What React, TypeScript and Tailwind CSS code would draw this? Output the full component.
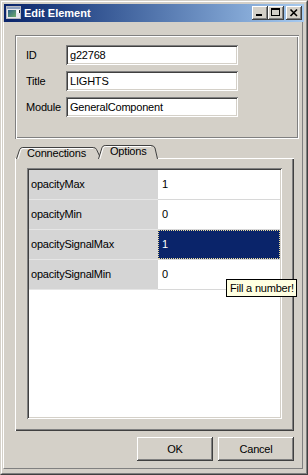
import React from "react";

const rows: [string, string][] = [
  ["opacityMax", "1"],
  ["opacityMin", "0"],
  ["opacitySignalMax", "1"],
  ["opacitySignalMin", "0"],
];

function CaptionButton({ children, className = "" }: { children: React.ReactNode; className?: string }) {
  return (
    <div
      className={
        "w-[16px] h-[14px] bg-[#d4d0c8] shadow-[inset_-1px_-1px_0_#404040,inset_1px_1px_0_#ffffff,inset_-2px_-2px_0_#808080,inset_2px_2px_0_#d4d0c8] " +
        className
      }
    >
      {children}
    </div>
  );
}

function Field({ label, value }: { label: string; value: string }) {
  return (
    <div className="flex items-center h-[20px]">
      <div className="w-[40px] leading-none">{label}</div>
      <div className="w-[172px] h-[20px] bg-white flex items-center pl-[4px] shadow-[inset_1px_1px_0_#808080,inset_-1px_-1px_0_#ffffff,inset_2px_2px_0_#404040,inset_-2px_-2px_0_#d4d0c8]">
        <span className="leading-none">{value}</span>
      </div>
    </div>
  );
}

function Button({ label }: { label: string }) {
  return (
    <div className="w-[76px] h-[24px] bg-[#d4d0c8] flex items-center justify-center shadow-[inset_-1px_-1px_0_#404040,inset_1px_1px_0_#ffffff,inset_-2px_-2px_0_#808080,inset_2px_2px_0_#d4d0c8]">
      <span className="leading-none">{label}</span>
    </div>
  );
}

export default function App() {
  return (
    <div className="w-[308px] h-[475px] bg-[#d4d0c8] font-['Liberation_Sans',Arial,sans-serif] text-[11px] tracking-[-0.2px] text-black">
      <div className="w-full h-full border border-t-[#d4d0c8] border-l-[#d4d0c8] border-r-[#404040] border-b-[#404040]">
        <div className="w-full h-full border border-t-white border-l-white border-r-[#808080] border-b-[#808080] p-px flex flex-col">
          {/* Title bar */}
          <div className="mx-px mt-px h-[18px] bg-linear-to-r from-[#0a246a] to-[#a6caf0] flex items-center pl-[2px] pr-[2px]">
            <svg width="16" height="14" viewBox="0 0 16 14" className="shrink-0">
              <defs>
                <linearGradient id="ig" x1="0" y1="0" x2="1" y2="1">
                  <stop offset="0" stopColor="#2d5f8a" />
                  <stop offset="1" stopColor="#6fae6a" />
                </linearGradient>
              </defs>
              <rect x="0" y="0" width="15" height="13" fill="#b8b8c0" />
              <rect x="1" y="1" width="13" height="11" fill="#e8e8ee" />
              <rect x="1" y="1" width="13" height="2" fill="#8da0c0" />
              <rect x="2" y="4" width="8" height="7" fill="url(#ig)" />
              <rect x="11" y="4" width="2" height="3" fill="#ffffff" />
              <rect x="13" y="4" width="1" height="3" fill="#202020" />
            </svg>
            <span className="ml-[2px] text-white font-bold text-[11px] tracking-normal leading-none">Edit Element</span>
            <div className="flex-1" />
            <div className="flex items-center">
              <CaptionButton>
                <div className="ml-[4px] mt-[8px] w-[6px] h-[2px] bg-black" />
              </CaptionButton>
              <CaptionButton>
                <div className="ml-[3px] mt-[2px] w-[9px] h-[8px] border border-black border-t-2" />
              </CaptionButton>
              <CaptionButton className="ml-[2px]">
                <svg width="16" height="14" viewBox="0 0 16 14">
                  <path d="M4.5 3.5 L11 10 M11 3.5 L4.5 10" stroke="#000" strokeWidth="1.6" />
                </svg>
              </CaptionButton>
            </div>
          </div>

          {/* Client area */}
          <div className="mr-[2px] h-[447px] border-l border-l-white border-r border-r-[#808080] border-b border-b-[#808080] flex flex-col">
            {/* Group box */}
            <div className="ml-[11px] mt-[13px] w-[284px] h-[104px] shadow-[inset_1px_1px_0_#808080,inset_-1px_-1px_0_#ffffff,inset_2px_2px_0_#ffffff,inset_-2px_-2px_0_#808080] pt-[10px] pl-[11px] flex flex-col gap-[6px]">
              <Field label="ID" value="g22768" />
              <Field label="Title" value="LIGHTS" />
              <Field label="Module" value="GeneralComponent" />
            </div>

            {/* Tabs */}
            <div className="ml-[11px] mt-[6px] h-[14px] -mb-px relative z-10 flex items-end pl-px">
              <div className="relative w-[86px] h-[12px] flex items-center">
                <svg className="absolute inset-0" width="86" height="12" viewBox="0 0 86 12">
                  <path d="M0.5 12 L3.6 2.6 Q4.4 0.5 6.8 0.5 L77.5 0.5 Q79.6 0.5 80.6 2.6 L85 12" fill="#d4d0c8" stroke="#404040" />
                  <path d="M1.9 12 L4.7 3.3 Q5.3 1.5 7 1.5 L77 1.5" fill="none" stroke="#ffffff" />
                </svg>
                <span className="relative ml-[11px] mt-[1px] leading-none">Connections</span>
              </div>
              <div className="relative -ml-[4px] w-[60px] h-[14px] flex items-center">
                <svg className="absolute inset-0" width="60" height="14" viewBox="0 0 60 14">
                  <path d="M0.5 14 L4 2.6 Q4.8 0.5 7.2 0.5 L53 0.5 Q56 0.5 57 3 L59.5 14" fill="#d4d0c8" stroke="#404040" />
                  <path d="M1.9 14 L5.1 3.3 Q5.7 1.5 7.4 1.5 L53 1.5" fill="none" stroke="#ffffff" />
                </svg>
                <span className="relative ml-[12px] -mt-[1px] leading-none">Options</span>
              </div>
            </div>

            {/* Tab panel */}
            <div className="ml-[11px] w-[279px] h-[273px] shadow-[inset_1px_1px_0_#ffffff,inset_-1px_-1px_0_#404040,inset_-2px_-2px_0_#808080] pl-[12px] pt-[10px]">
              <div className="relative w-[255px] h-[251px] bg-white p-[2px] shadow-[inset_1px_1px_0_#808080,inset_-1px_-1px_0_#ffffff,inset_2px_2px_0_#404040,inset_-2px_-2px_0_#d4d0c8]">
                <div className="flex flex-col">
                  {rows.map(([k, v], i) => (
                    <div key={k} className="flex h-[30px]">
                      <div className="w-[129px] bg-[#d5d5d5] border-b border-b-[#e6e6e6] flex items-center pl-[2px]">
                        <span className="leading-none">{k}</span>
                      </div>
                      {i === 2 ? (
                        <div className="flex-1 bg-white border-b border-b-[#d8d8d8]">
                          <div className="h-full bg-[#0a246a] border border-dotted border-[#eadb9a] flex items-center pl-[3px] text-white">
                            <span className="leading-none">{v}</span>
                          </div>
                        </div>
                      ) : (
                        <div className="flex-1 bg-white border-b border-b-[#d8d8d8] flex items-center pl-[4px]">
                          <span className="leading-none">{v}</span>
                        </div>
                      )}
                    </div>
                  ))}
                </div>
                <div className="absolute left-[199px] top-[111px] h-[18px] bg-[#ffffe1] border border-black pl-[3px] pr-[2px] flex items-center whitespace-nowrap">
                  <span className="leading-none">Fill a number!</span>
                </div>
              </div>
            </div>

            {/* Buttons */}
            <div className="ml-[11px] mt-[6px] w-[279px] flex justify-end gap-[5px]">
              <Button label="OK" />
              <Button label="Cancel" />
            </div>
          </div>
        </div>
      </div>
    </div>
  );
}
